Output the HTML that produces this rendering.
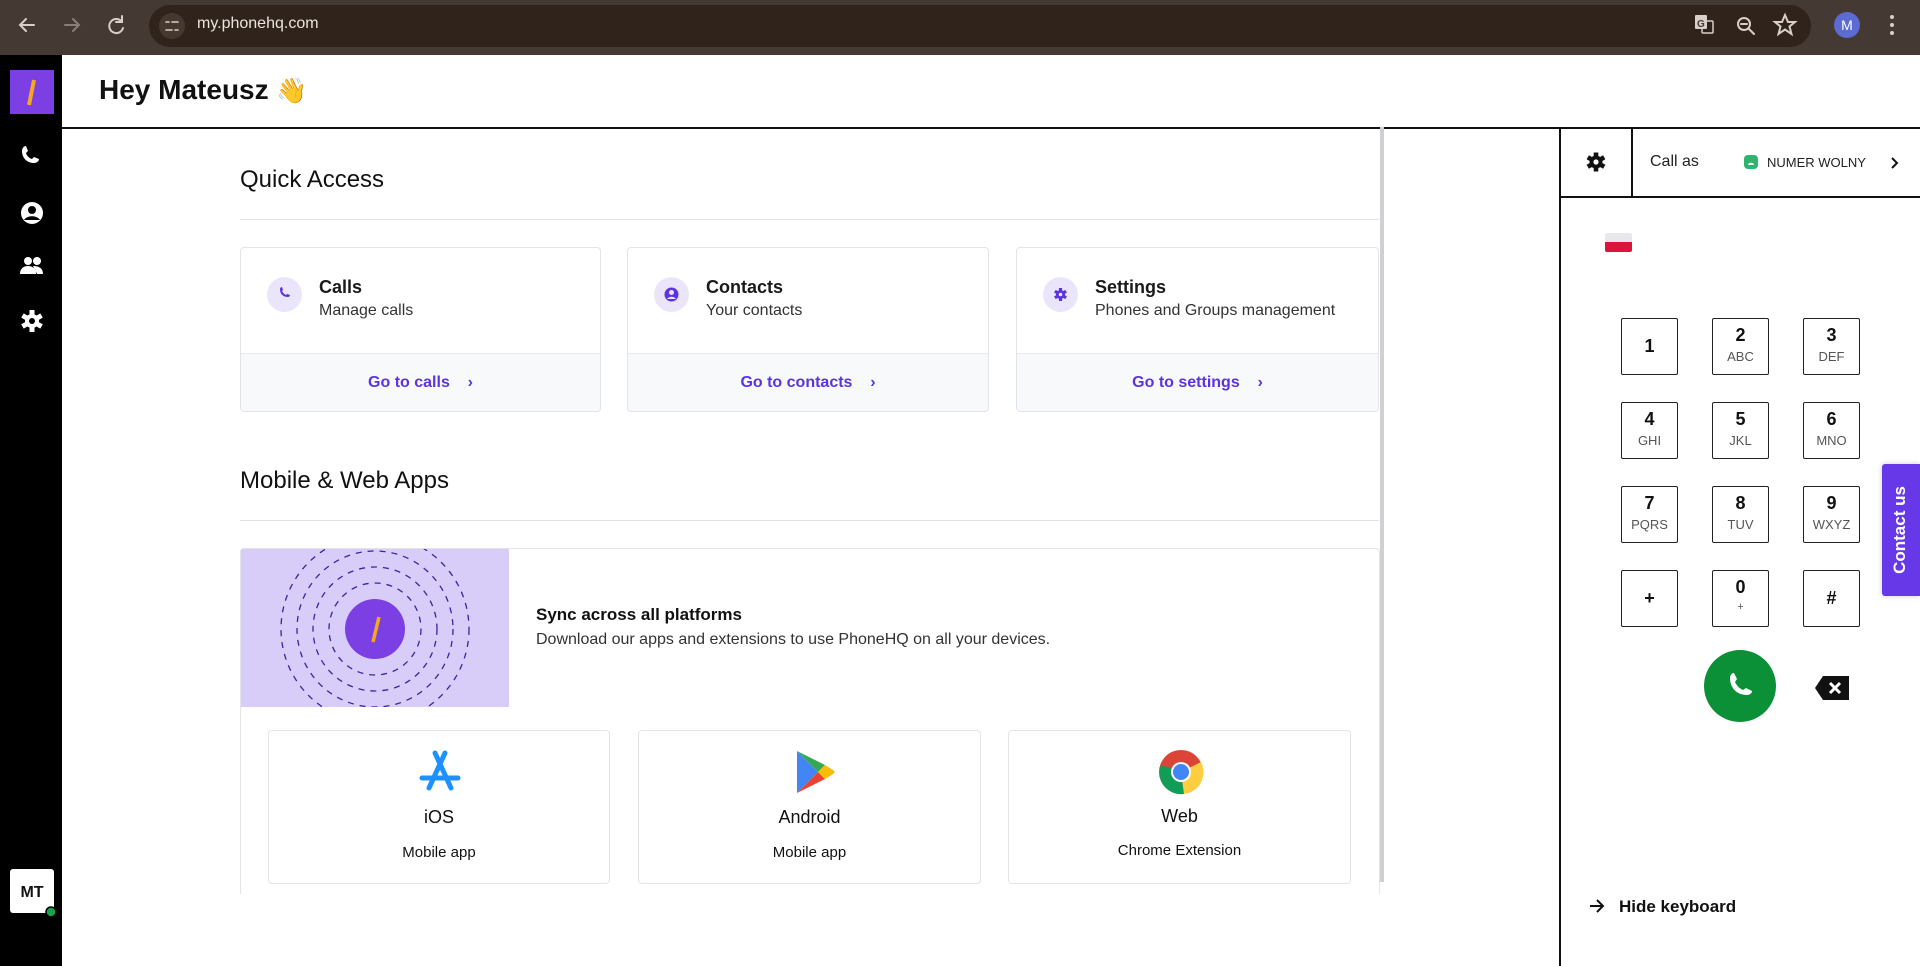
<!DOCTYPE html>
<html><head><meta charset="utf-8"><style>
*{box-sizing:border-box;margin:0;padding:0}
body{width:1920px;height:966px;overflow:hidden;background:#fff;font-family:"Liberation Sans","Noto Sans CJK JP",sans-serif;position:relative;color:#111}
.abs{position:absolute}
.chrome{left:0;top:0;width:1920px;height:55px;background:#453a33}
.pill{left:149px;top:5px;width:1662px;height:42px;border-radius:21px;background:#2f231c}
.side{left:0;top:55px;width:62px;height:911px;background:#000}
.card{border:1px solid #e3e4e8;border-radius:4px;background:#fff;overflow:hidden}
.card .ft{position:absolute;left:0;right:0;bottom:0;height:58px;background:#f8f9fa;border-top:1px solid #e9eaee;text-align:center;line-height:58px;color:#5b34e0;font-weight:bold;font-size:16px}
.ic{width:35px;height:35px;border-radius:50%;background:#ebe5fb;left:26px;top:29px}
.ct{left:78px;top:29px;font-size:18px;font-weight:bold;color:#1a1a1a}
.cs{left:78px;top:54px;font-size:16px;color:#333}
.key{width:57px;height:57px;border:1.5px solid #222;border-radius:2px;text-align:center;background:#fff}
.key b{display:block;font-size:18px;margin-top:6px;font-weight:bold}
.key span{display:block;font-size:13px;color:#555;margin-top:3px}
.key.s b{margin-top:17px}
.app{border:1px solid #e3e4e8;border-radius:4px;text-align:center}
.app .t{position:absolute;left:0;right:0;top:76px;font-size:18px;color:#111}
.app .st{position:absolute;left:0;right:0;top:113px;font-size:15px;color:#111}
</style></head><body>
<div class="abs chrome"></div>
<div class="abs pill"></div>
<svg class="abs" style="left:0;top:0" width="1920" height="55">
<g stroke="#d9cfc8" stroke-width="2" fill="none" stroke-linecap="round">
<path d="M34 25H20M26 19l-6 6 6 6"/>
<path d="M65 25h14M73 19l6 6-6 6" stroke="#8a7f78"/>
<path d="M122 22a7 7 0 1 0 1 6M122 16v6h-6"/>
<circle cx="172" cy="26" r="13" fill="#45392f" stroke="none"/>
<path d="M166 22h3M172 22h6M166 30h6M175 30h3" stroke-width="1.6"/>
<circle cx="1744" cy="24" r="6"/><path d="M1741 24h6M1749 29l5 5"/>
<path d="M1785 15l3 7h7l-5.5 4.5 2 7.5-6.5-4.5-6.5 4.5 2-7.5-5.5-4.5h7z"/>
</g>
<rect x="1695" y="15" width="12" height="14" rx="1" fill="#d9cfc8"/><rect x="1702" y="21" width="11" height="12" rx="1" fill="none" stroke="#d9cfc8" stroke-width="1.5"/>
<text x="1697" y="27" font-size="10" font-weight="bold" fill="#453a33" font-family="Liberation Sans">G</text>
<circle cx="1847" cy="25" r="13" fill="#5c6bd1"/>
<text x="1847" y="30" font-size="14" fill="#fff" text-anchor="middle" font-family="Liberation Sans">M</text>
<circle cx="1892" cy="17" r="2" fill="#d9cfc8"/><circle cx="1892" cy="25" r="2" fill="#d9cfc8"/><circle cx="1892" cy="33" r="2" fill="#d9cfc8"/>
</svg>
<div class="abs" style="left:197px;top:15px;font-size:16px;color:#ece4de">my.phonehq.com</div>

<div class="abs side"></div>
<svg class="abs" style="left:0;top:55px" width="62" height="911">
<rect x="10" y="15" width="44" height="44" fill="#7b3fe4"/>
<path d="M34 25l-5 25" stroke="#f5a623" stroke-width="4"/>
<path d="M22 96c0-3 2-5 4-5l2 5-2 2c1 3 3 5 6 6l2-2 5 2c0 2-2 4-5 4-7 0-12-5-12-12z" fill="#fff"/>
<circle cx="32" cy="158" r="11" fill="#fff"/><circle cx="32" cy="155" r="4" fill="#000"/><path d="M24 165c3-5 13-5 16 0" fill="#000"/>
<circle cx="28" cy="206" r="4" fill="#fff"/><circle cx="37" cy="206" r="4" fill="#fff"/><path d="M20 219c0-6 4-8 8-8s8 2 8 8zM33 211c4 0 10 1 10 8h-6z" fill="#fff"/>
<g transform="translate(32 266)"><circle r="7" fill="#fff"/><g fill="#fff"><rect x="-2.5" y="-11" width="5" height="22"/><rect x="-2.5" y="-11" width="5" height="22" transform="rotate(60)"/><rect x="-2.5" y="-11" width="5" height="22" transform="rotate(120)"/></g><circle r="3" fill="#000"/></g>
<rect x="10" y="814" width="44" height="44" rx="3" fill="#fff"/>
<text x="32" y="842" font-size="16" font-weight="bold" text-anchor="middle" font-family="Liberation Sans" fill="#111">MT</text>
<circle cx="51" cy="857" r="5" fill="#17a34a" stroke="#000" stroke-width="1.5"/>
</svg>

<div class="abs" style="left:99px;top:74px;font-size:28px;font-weight:bold;color:#111">Hey Mateusz <span style="font-size:25px">👋</span></div>
<div class="abs" style="left:62px;top:127px;width:1858px;height:1.5px;background:#111"></div>

<div class="abs" style="left:240px;top:166px;font-size:24px;color:#111">Quick Access</div>
<div class="abs" style="left:240px;top:219px;width:1139px;height:1px;background:#dfe0e4"></div>

<div class="abs card" style="left:240px;top:247px;width:361px;height:165px">
 <div class="abs ic"><svg width="35" height="35"><path d="M13 12c0-1 1-2 2-2l1 3-1 1c1 2 2 3 4 4l1-1 3 1c0 1-1 2-2 2-5 0-8-3-8-8z" fill="#5b34e0"/></svg></div>
 <div class="abs ct">Calls</div><div class="abs cs">Manage calls</div>
 <div class="ft">Go to calls&nbsp;&nbsp;&nbsp; ›</div>
</div>
<div class="abs card" style="left:627px;top:247px;width:362px;height:165px">
 <div class="abs ic"><svg width="35" height="35"><circle cx="17.5" cy="17.5" r="7" fill="#5b34e0"/><circle cx="17.5" cy="15.5" r="2.5" fill="#ebe5fb"/><path d="M13 22c2-3 7-3 9 0" fill="#ebe5fb"/></svg></div>
 <div class="abs ct">Contacts</div><div class="abs cs">Your contacts</div>
 <div class="ft">Go to contacts&nbsp;&nbsp;&nbsp; ›</div>
</div>
<div class="abs card" style="left:1016px;top:247px;width:363px;height:165px">
 <div class="abs ic"><svg width="35" height="35"><g transform="translate(17.5 17.5)" fill="#5b34e0"><circle r="4.5"/><rect x="-1.6" y="-6.5" width="3.2" height="13"/><rect x="-1.6" y="-6.5" width="3.2" height="13" transform="rotate(60)"/><rect x="-1.6" y="-6.5" width="3.2" height="13" transform="rotate(120)"/><circle r="1.8" fill="#ebe5fb"/></g></svg></div>
 <div class="abs ct">Settings</div><div class="abs cs">Phones and Groups management</div>
 <div class="ft">Go to settings&nbsp;&nbsp;&nbsp; ›</div>
</div>

<div class="abs" style="left:240px;top:467px;font-size:24px;color:#111">Mobile &amp; Web Apps</div>
<div class="abs" style="left:240px;top:520px;width:1139px;height:1px;background:#dfe0e4"></div>

<div class="abs" style="left:240px;top:548px;width:1140px;height:346px;border:1px solid #e3e4e8;border-bottom:none;border-radius:4px 4px 0 0"></div>
<svg class="abs" style="left:241px;top:549px" width="268" height="158">
<rect width="268" height="158" fill="#d8cdf8"/>
<g fill="none" stroke="#3b23a0" stroke-width="1.3" stroke-dasharray="6 6">
<circle cx="134" cy="80" r="46"/><circle cx="134" cy="80" r="62"/><circle cx="134" cy="80" r="78"/><circle cx="134" cy="80" r="94"/></g>
<circle cx="134" cy="80" r="30" fill="#7b3fe4"/>
<path d="M138 68l-6 25" stroke="#f5a623" stroke-width="3.5"/>
</svg>
<div class="abs" style="left:536px;top:605px;font-size:17px;font-weight:bold;color:#111">Sync across all platforms</div>
<div class="abs" style="left:536px;top:631px;font-size:16px;color:#333">Download our apps and extensions to use PhoneHQ on all your devices.</div>

<div class="abs app" style="left:268px;top:730px;width:342px;height:154px">
 <svg class="abs" style="left:149px;top:18px" width="44" height="44"><g stroke="#1e90ff" stroke-width="5" stroke-linecap="round" fill="none"><path d="M17 4l16 35M27 4L11 39M4 29h36"/></g></svg>
 <div class="t">iOS</div><div class="st">Mobile app</div>
</div>
<div class="abs app" style="left:638px;top:730px;width:343px;height:154px">
 <svg class="abs" style="left:152px;top:18px" width="44" height="46"><path d="M6 2L27 23 6 44z" fill="#4285f4"/><path d="M6 2l21 21 7-7z" fill="#34a853"/><path d="M6 44l21-21 7 7z" fill="#ea4335"/><path d="M27 23l7-7 8 5c2 1 2 3 0 4l-8 5z" fill="#fbbc04"/></svg>
 <div class="t">Android</div><div class="st">Mobile app</div>
</div>
<div class="abs app" style="left:1008px;top:730px;width:343px;height:154px">
 <svg class="abs" style="left:149px;top:18px" width="46" height="46"><circle cx="23" cy="23" r="22" fill="#db4437"/><path d="M23 23L4 34A22 22 0 0 0 26 45z" fill="#0f9d58"/><path d="M23 23L26 45A22 22 0 0 0 43 13z" fill="#ffcd40"/><path d="M23 23L4 34A22 22 0 0 1 3 16z" fill="#0f9d58"/><circle cx="23" cy="23" r="10" fill="#fff"/><circle cx="23" cy="23" r="8" fill="#4285f4"/></svg>
 <div class="t" style="top:75px">Web</div><div class="st" style="top:111px">Chrome Extension</div>
</div>

<div class="abs" style="left:1380px;top:127px;width:4px;height:755px;background:#d0d0d4"></div>

<div class="abs" style="left:1559px;top:127px;width:1.5px;height:839px;background:#111"></div>
<div class="abs" style="left:1559px;top:196px;width:361px;height:1.5px;background:#111"></div>
<div class="abs" style="left:1631px;top:127px;width:1.5px;height:70px;background:#111"></div>
<svg class="abs" style="left:1584px;top:150px" width="24" height="24"><g transform="translate(12 12)" fill="#111"><circle r="6.5"/><rect x="-2.3" y="-9.5" width="4.6" height="19"/><rect x="-2.3" y="-9.5" width="4.6" height="19" transform="rotate(60)"/><rect x="-2.3" y="-9.5" width="4.6" height="19" transform="rotate(120)"/><circle r="2.6" fill="#fff"/></g></svg>
<div class="abs" style="left:1650px;top:153px;font-size:16px;color:#222">Call as</div>
<svg class="abs" style="left:1744px;top:155px" width="14" height="14"><rect width="14" height="14" rx="4" fill="#2db56d"/><path d="M4 10c0-3 6-3 6 0z" fill="#fff"/></svg>
<div class="abs" style="left:1767px;top:155px;font-size:13px;color:#222">NUMER WOLNY</div>
<svg class="abs" style="left:1889px;top:156px" width="12" height="14"><path d="M3 2l5 5-5 5" stroke="#111" stroke-width="2" fill="none"/></svg>

<div class="abs" style="left:1605px;top:233px;width:27px;height:19px;border-radius:2px;overflow:hidden"><div style="height:9px;background:#e8e8ea"></div><div style="height:10px;background:#dc143c"></div></div>

<div class="abs key s" style="left:1621px;top:318px"><b>1</b></div>
<div class="abs key" style="left:1712px;top:318px"><b>2</b><span>ABC</span></div>
<div class="abs key" style="left:1803px;top:318px"><b>3</b><span>DEF</span></div>
<div class="abs key" style="left:1621px;top:402px"><b>4</b><span>GHI</span></div>
<div class="abs key" style="left:1712px;top:402px"><b>5</b><span>JKL</span></div>
<div class="abs key" style="left:1803px;top:402px"><b>6</b><span>MNO</span></div>
<div class="abs key" style="left:1621px;top:486px"><b>7</b><span>PQRS</span></div>
<div class="abs key" style="left:1712px;top:486px"><b>8</b><span>TUV</span></div>
<div class="abs key" style="left:1803px;top:486px"><b>9</b><span>WXYZ</span></div>
<div class="abs key s" style="left:1621px;top:570px"><b>+</b></div>
<div class="abs key" style="left:1712px;top:570px"><b>0</b><span style="font-size:11px">+</span></div>
<div class="abs key s" style="left:1803px;top:570px"><b>#</b></div>

<svg class="abs" style="left:1704px;top:650px" width="72" height="72"><circle cx="36" cy="36" r="36" fill="#0b9037"/><path d="M26 28c0-3 2-5 4-5l3 6-2 3c2 4 4 6 8 8l3-2 6 3c0 2-2 4-5 4-10 0-17-7-17-17z" fill="#fff"/></svg>
<svg class="abs" style="left:1814px;top:675px" width="36" height="26"><path d="M9 1h26v24H9L1 13z" fill="#111"/><path d="M16 8l10 10M26 8L16 18" stroke="#fff" stroke-width="3"/></svg>

<div class="abs" style="left:1882px;top:464px;width:38px;height:132px;background:#6738e8;border-radius:3px 0 0 3px;box-shadow:0 0 6px rgba(0,0,0,.2)"></div>
<div class="abs" style="left:1836px;top:519px;width:130px;height:22px;transform:rotate(-90deg);color:#fff;font-size:17px;font-weight:bold;text-align:center">Contact us</div>

<svg class="abs" style="left:1588px;top:897px" width="18" height="18"><path d="M2 9h13M9 3l6 6-6 6" stroke="#111" stroke-width="2" fill="none"/></svg>
<div class="abs" style="left:1619px;top:897px;font-size:17px;font-weight:bold;color:#111">Hide keyboard</div>
</body></html>
